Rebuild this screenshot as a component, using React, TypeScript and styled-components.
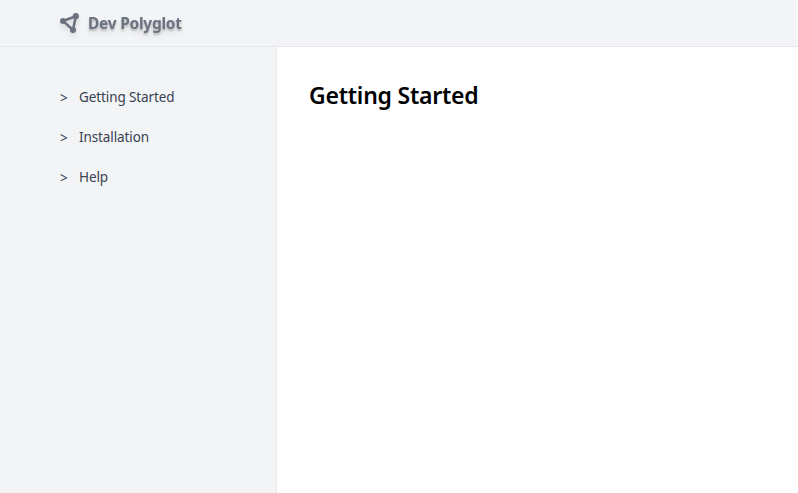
import React from "react";
import styled, { createGlobalStyle } from "styled-components";

const GlobalStyle = createGlobalStyle`
  *, *::before, *::after { box-sizing: border-box; }
  body { margin: 0; background: #fff; font-family: "Noto Sans", sans-serif; }
`;

const Page = styled.div`
  display: flex;
  flex-direction: column;
  height: 100vh;
  overflow: hidden;
`;

const Header = styled.header`
  display: flex;
  align-items: center;
  flex: 0 0 47px;
  padding-left: 60px;
  background: #f3f4f6;
  border-bottom: 1px solid #e5e7eb;
`;

const Brand = styled.div`
  display: flex;
  align-items: center;
  gap: 8px;
  color: #6b7280;
  font-size: 15.5px;
  font-weight: 680;
  letter-spacing: -0.25px;
  line-height: 24px;
  filter: drop-shadow(0 4px 3px rgba(0, 0, 0, 0.07)) drop-shadow(0 2px 2px rgba(0, 0, 0, 0.06));
`;

const BrandName = styled.span`
  text-shadow: 0 2px 2px rgba(0, 0, 0, 0.2);
`;

const LogoIcon = styled.svg`
  display: block;
  width: 20px;
  height: 20px;
`;

const Body = styled.div`
  display: flex;
  flex: 1;
`;

const Sidebar = styled.nav`
  flex: 0 0 277px;
  padding: 30px 0 0 60px;
  background: #f3f4f6;
  border-right: 1px solid #e5e7eb;
`;

const NavItem = styled.a`
  display: flex;
  align-items: center;
  gap: 11px;
  height: 40px;
  color: #374151;
  font-size: 13.5px;
  letter-spacing: -0.1px;
  line-height: 20px;
`;

const Marker = styled.span`
  width: 8px;
  padding-top: 2px;
`;

const Content = styled.main`
  flex: 1;
  padding: 32px;
`;

const Title = styled.h1`
  margin: 0;
  color: #000;
  font-size: 23px;
  font-weight: 650;
  letter-spacing: -0.24px;
  line-height: 32px;
`;

const sections = ["Getting Started", "Installation", "Help"];

export default function App() {
  return (
    <>
      <GlobalStyle />
      <Page>
        <Header>
          <Brand>
            <LogoIcon viewBox="0 0 20 20" fill="currentColor">
              <path d="M3 8 15.8 3.2 13 17Z" fill="none" stroke="currentColor" strokeWidth="2.6" />
              <circle cx="3" cy="8" r="3" />
              <circle cx="15.8" cy="3.2" r="3.1" />
              <circle cx="13" cy="17" r="3.1" />
            </LogoIcon>
            <BrandName>Dev Polyglot</BrandName>
          </Brand>
        </Header>
        <Body>
          <Sidebar>
            {sections.map((label) => (
              <NavItem key={label}>
                <Marker>&gt;</Marker>
                <span>{label}</span>
              </NavItem>
            ))}
          </Sidebar>
          <Content>
            <Title>Getting Started</Title>
          </Content>
        </Body>
      </Page>
    </>
  );
}
